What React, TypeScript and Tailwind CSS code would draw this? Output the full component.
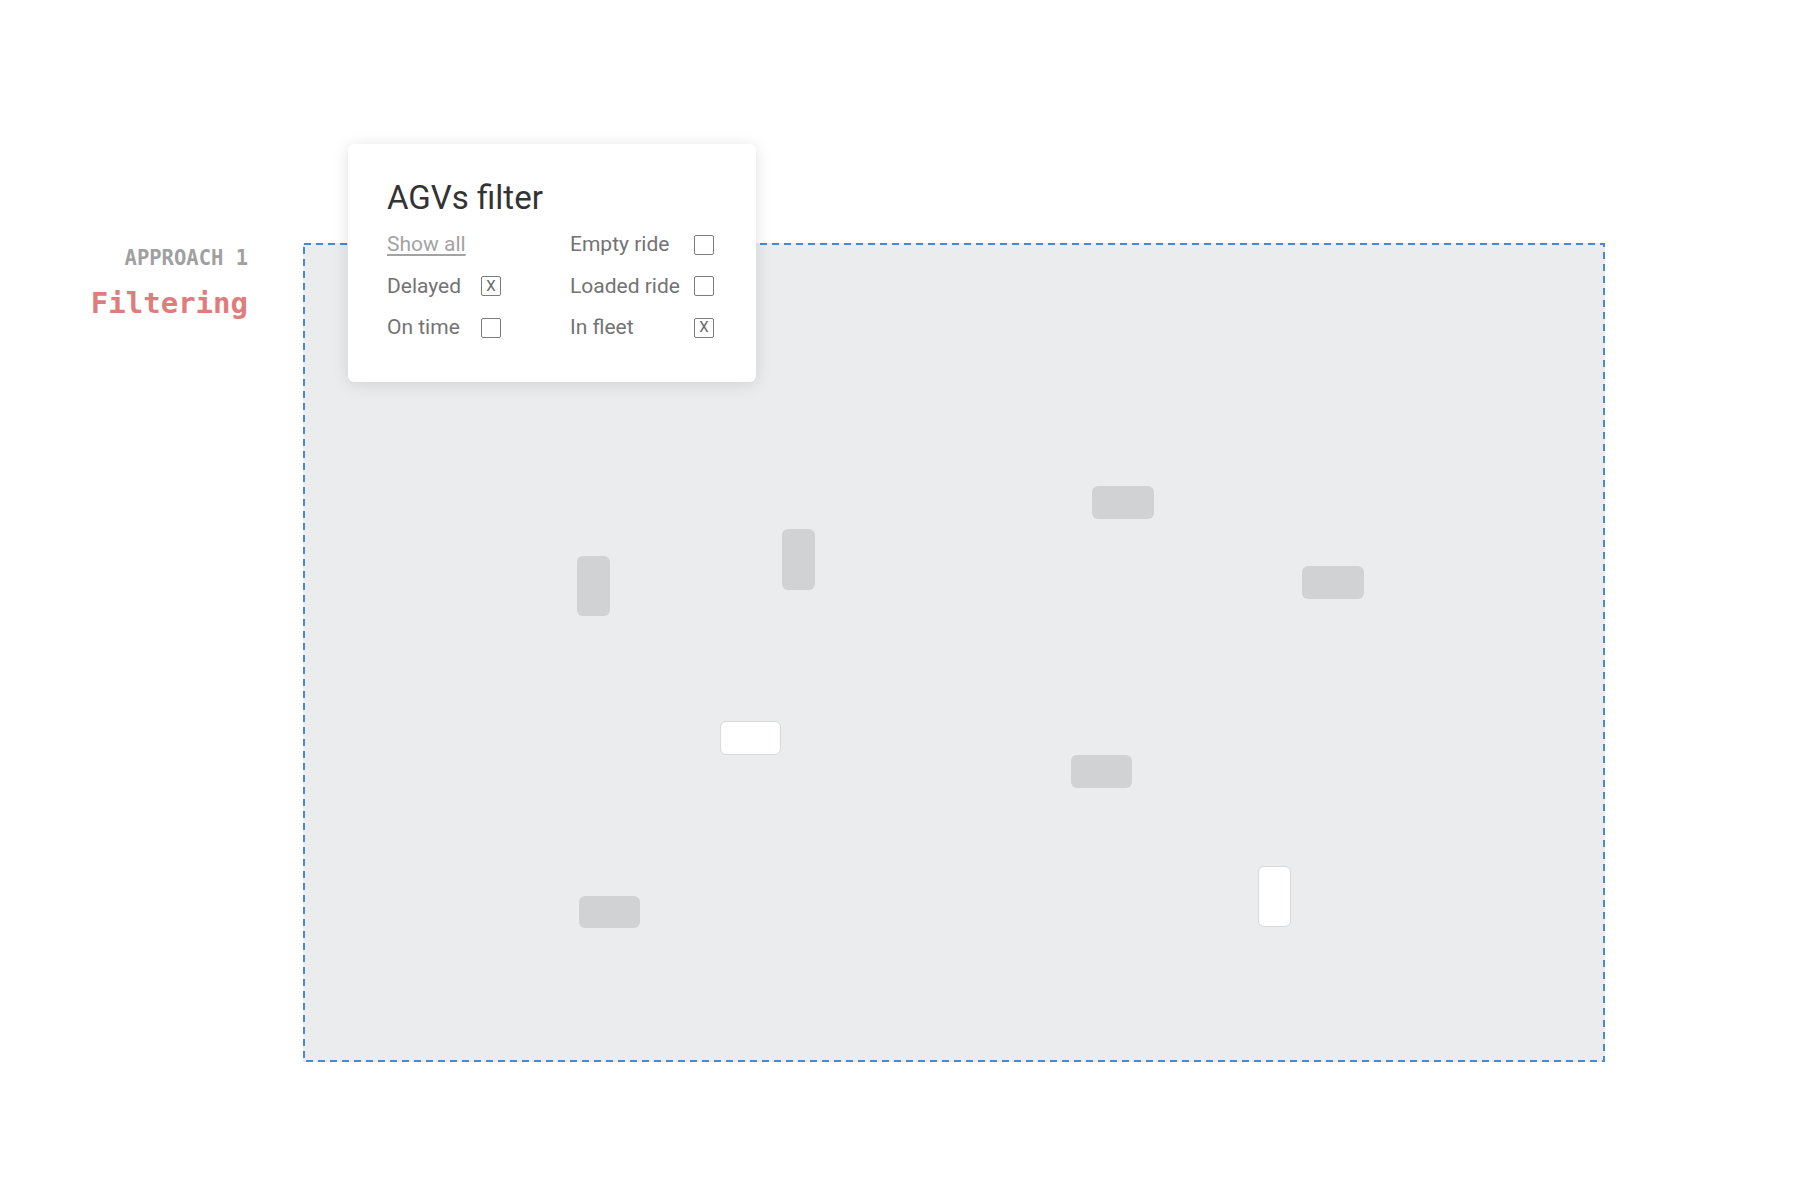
import React from 'react'

type Agv = { left: string; top: string; size: string; active: boolean }

// AGV markers on the map, positions relative to the canvas
const agvs: Agv[] = [
  { left: 'left-[789px]', top: 'top-[243px]', size: 'w-[62px] h-[33px]', active: false },
  { left: 'left-[274px]', top: 'top-[313px]', size: 'w-[33px] h-[60px]', active: false },
  { left: 'left-[479px]', top: 'top-[286px]', size: 'w-[33px] h-[61px]', active: false },
  { left: 'left-[999px]', top: 'top-[323px]', size: 'w-[62px] h-[33px]', active: false },
  { left: 'left-[417px]', top: 'top-[478px]', size: 'w-[61px] h-[34px]', active: true },
  { left: 'left-[768px]', top: 'top-[512px]', size: 'w-[61px] h-[33px]', active: false },
  { left: 'left-[276px]', top: 'top-[653px]', size: 'w-[61px] h-[32px]', active: false },
  { left: 'left-[955px]', top: 'top-[623px]', size: 'w-[33px] h-[61px]', active: true },
]

function Checkbox({ checked }: { checked?: boolean }) {
  return (
    <span className="w-[20px] h-[20px] border-[1.5px] border-[#7c7c7c] rounded-[2px] flex items-center justify-center text-[15px] leading-none text-[#666] font-['Roboto',sans-serif]">
      {checked ? 'X' : ''}
    </span>
  )
}

function FilterRow({ label, checked }: { label: string; checked?: boolean }) {
  return (
    <div className="h-[41.5px] flex items-center justify-between">
      <span>{label}</span>
      <Checkbox checked={checked} />
    </div>
  )
}

export default function App() {
  return (
    <div className="w-[1794px] h-[1196px] bg-white flex pt-[243px]">
      {/* section label */}
      <div className="w-[248px] pt-[5px] flex flex-col items-end font-['DejaVu_Sans_Mono',monospace] font-bold">
        <div className="text-[20.5px] leading-[20px] text-[#a0a0a0]">APPROACH 1</div>
        <div className="mt-[21px] text-[29px] leading-[29px] text-[#e07c7c]">Filtering</div>
      </div>

      {/* map canvas */}
      <div className="relative ml-[55px] w-[1302px] h-[819px] bg-[#ebeced]">
        <svg className="absolute inset-0 w-full h-full" width="1302" height="819">
          <rect x="1" y="1" width="1300" height="817" fill="none" stroke="#4a88d2" strokeWidth="2" strokeDasharray="7 5" />
        </svg>

        {agvs.map((a, i) => (
          <div
            key={i}
            className={`absolute ${a.left} ${a.top} ${a.size} rounded-[6px] ${
              a.active ? 'bg-white border border-[#d9d9d9]' : 'bg-[#d0d2d4]'
            }`}
          />
        ))}

        {/* filter popover */}
        <div className="absolute left-[45px] top-[-99px] w-[408px] h-[238px] bg-white rounded-[6px] shadow-[0_2px_16px_rgba(0,0,0,0.12)] pt-[38px] pl-[39px] font-['Roboto',sans-serif]">
          <h2 className="text-[33px] leading-[32px] font-normal text-[#333]">AGVs filter</h2>
          <div className="mt-[10px] grid grid-cols-[114px_144px] gap-x-[69px] text-[21px] text-[#737373]">
            <div className="h-[41.5px] flex items-center">
              <span className="text-[#a3a3a3] underline underline-offset-[3px]">Show all</span>
            </div>
            <FilterRow label="Empty ride" />
            <FilterRow label="Delayed" checked />
            <FilterRow label="Loaded ride" />
            <FilterRow label="On time" />
            <FilterRow label="In fleet" checked />
          </div>
        </div>
      </div>
    </div>
  )
}
